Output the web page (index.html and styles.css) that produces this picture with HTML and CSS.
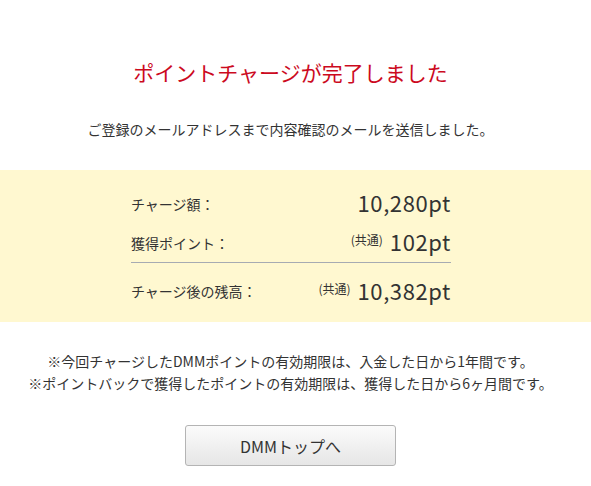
FILE: index.html
```html
<!DOCTYPE html>
<html lang="ja">
<head>
<meta charset="utf-8">
<title>ポイントチャージ完了</title>
<link rel="stylesheet" href="styles.css">
</head>
<body>
<div class="page">
  <h1 class="title">ポイントチャージが完了しました</h1>
  <p class="lead">ご登録のメールアドレスまで内容確認のメールを送信しました。</p>
  <div class="band">
    <div class="summary">
      <div class="row">
        <span class="label">チャージ額：</span>
        <span class="value">10,280pt</span>
      </div>
      <div class="row row-sep">
        <span class="label">獲得ポイント：</span>
        <span class="value"><span class="tag">(共通)</span>102pt</span>
      </div>
      <div class="row row-total">
        <span class="label">チャージ後の残高：</span>
        <span class="value"><span class="tag">(共通)</span>10,382pt</span>
      </div>
    </div>
  </div>
  <div class="notes">
    <p>※今回チャージしたDMMポイントの有効期限は、入金した日から1年間です。</p>
    <p>※ポイントバックで獲得したポイントの有効期限は、獲得した日から6ヶ月間です。</p>
  </div>
  <div class="actions">
    <a class="btn" href="#">DMMトップへ</a>
  </div>
</div>
</body>
</html>
```
FILE: styles.css
```css
html, body {
  margin: 0;
  padding: 0;
  background: #fff;
}
body {
  font-family: "Noto Sans CJK JP", "Noto Sans", sans-serif;
  color: #333;
}
.page {
  width: 581px;
  padding-top: 56px;
}
.title {
  margin: 0;
  font-size: 21px;
  line-height: 32px;
  font-weight: normal;
  color: #cc0a1e;
  text-align: center;
}
.lead {
  margin: 30px 0 0;
  font-size: 14px;
  line-height: 22px;
  text-align: center;
}
.band {
  margin-top: 30px;
  width: 591px;
  background: #fff8d0;
  padding: 14px 0 3px;
}
.summary {
  width: 320px;
  margin-left: 131px;
}
.row {
  display: flex;
  justify-content: space-between;
  align-items: center;
  height: 39px;
}
.row-sep {
  border-bottom: 1px solid #a7abb2;
}
.row-total {
  height: 56px;
}
.label {
  font-size: 14px;
}
.value {
  font-size: 22px;
  line-height: 30px;
  letter-spacing: 0.6px;
  display: flex;
  align-items: center;
  margin-top: -3px;
}
.tag {
  font-size: 12px;
  letter-spacing: 0;
  margin-right: 7px;
  position: relative;
  top: -1px;
}
.notes {
  margin-top: 28px;
  text-align: center;
  font-size: 14px;
  line-height: 22px;
}
.notes p {
  margin: 0;
  white-space: nowrap;
}
.actions {
  margin-top: 31px;
  display: flex;
  justify-content: center;
}
.btn {
  display: flex;
  align-items: center;
  justify-content: center;
  width: 209px;
  height: 39px;
  border: 1px solid #b4b4b4;
  border-radius: 3px;
  background: linear-gradient(#fbfbfb, #e6e6e6);
  color: #333;
  font-size: 16px;
  text-decoration: none;
}
```
